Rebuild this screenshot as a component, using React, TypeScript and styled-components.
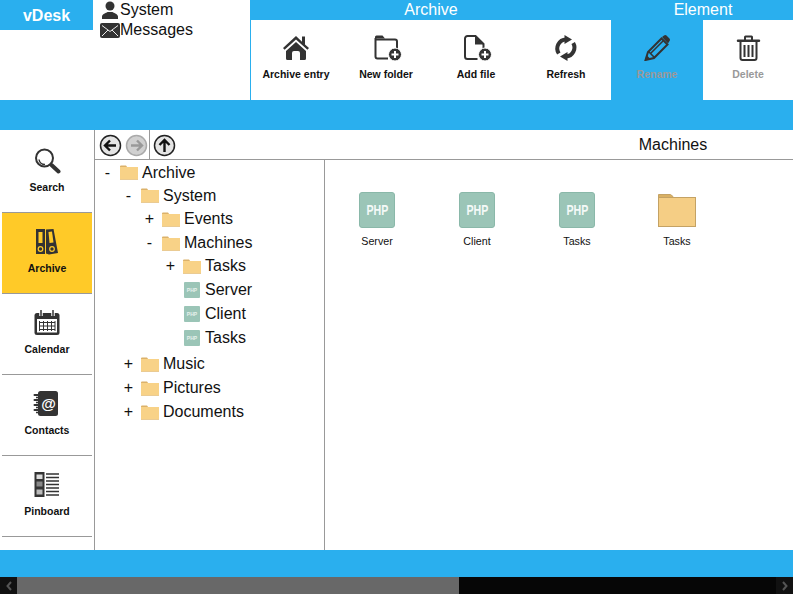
import React from 'react';
import styled, { createGlobalStyle } from 'styled-components';

const BLUE = '#2aafee';
const DARK = '#333333';
const LINE = '#999999';

const GlobalStyle = createGlobalStyle`
  html, body {
    margin: 0;
    padding: 0;
    overflow: hidden;
    background: #fff;
    font-family: "Liberation Sans", Arial, sans-serif;
    color: #111;
  }
`;

const Page = styled.div`
  width: 793px;
  height: 594px;
  display: flex;
  flex-direction: column;
  overflow: hidden;
`;

const Header = styled.header`
  height: 100px;
  display: flex;
`;

const Brand = styled.div`
  width: 93px;
  height: 30px;
  background: ${BLUE};
  color: #fff;
  font-size: 16px;
  font-weight: bold;
  line-height: 31px;
  text-align: center;
`;

const UserMenu = styled.div`
  width: 157px;
  box-sizing: border-box;
  padding-left: 7px;
  display: flex;
  flex-direction: column;
`;

const UserRow = styled.div`
  height: 20px;
  display: flex;
  align-items: center;
  font-size: 16px;
  line-height: 20px;
`;

const UserIcon = styled.svg`
  width: 20px;
  height: 18px;
  flex: none;
`;

const Ribbon = styled.div`
  flex: 1;
  display: flex;
  border-left: 1px solid ${BLUE};
`;

const RibbonGroup = styled.section<{ $width: number }>`
  width: ${(p) => p.$width}px;
  display: flex;
  flex-direction: column;
`;

const RibbonTitle = styled.div<{ $inset?: number }>`
  height: 20px;
  padding-left: ${(p) => p.$inset ?? 0}px;
  background: ${BLUE};
  color: #fff;
  font-size: 16px;
  line-height: 19px;
  text-align: center;
`;

const RibbonButtons = styled.div`
  height: 80px;
  display: flex;
`;

const RibbonButton = styled.div<{ $width?: number; $selected?: boolean; $disabled?: boolean }>`
  width: ${(p) => p.$width ?? 90}px;
  padding-top: 15px;
  box-sizing: border-box;
  display: flex;
  flex-direction: column;
  align-items: center;
  background: ${(p) => (p.$selected ? BLUE : '#fff')};
  color: ${(p) => (p.$disabled ? '#999' : '#111')};
  font-size: 10.5px;
  font-weight: bold;
  line-height: 13px;
`;

const ToolIcon = styled.svg`
  width: 32px;
  height: 26px;
  margin-bottom: 7px;
  flex: none;
`;

const Band = styled.div<{ $height: number }>`
  height: ${(p) => p.$height}px;
  flex: none;
  background: ${BLUE};
`;

const Main = styled.main`
  flex: 1;
  min-height: 0;
  display: flex;
`;

const Sidebar = styled.nav`
  width: 95px;
  box-sizing: border-box;
  padding: 2px 2px 0;
  border-right: 1px solid ${LINE};
  flex: none;
`;

const NavItem = styled.div<{ $active?: boolean }>`
  width: 90px;
  height: 81px;
  box-sizing: border-box;
  padding-top: 16px;
  display: flex;
  flex-direction: column;
  align-items: center;
  background: ${(p) => (p.$active ? '#ffca28' : 'transparent')};
  border-bottom: 1px solid ${LINE};
  font-size: 10.5px;
  font-weight: bold;
  line-height: 13px;
`;

const Workspace = styled.div`
  flex: 1;
  min-width: 0;
  display: flex;
  flex-direction: column;
`;

const PathBar = styled.div`
  height: 30px;
  box-sizing: border-box;
  flex: none;
  display: flex;
  border-bottom: 1px solid ${LINE};
`;

const NavGroup = styled.div<{ $divided?: boolean }>`
  height: 29px;
  box-sizing: border-box;
  padding: 3.5px 0 0 ${(p) => (p.$divided ? 3.5 : 2.5)}px;
  display: flex;
  gap: 3px;
  width: ${(p) => (p.$divided ? '55px' : 'auto')};
  border-right: ${(p) => (p.$divided ? `1px solid ${LINE}` : 'none')};
`;

const RoundIcon = styled.svg`
  width: 23px;
  height: 23px;
  flex: none;
`;

const PathTitle = styled.div`
  width: 240px;
  margin-left: auto;
  font-size: 16px;
  line-height: 29px;
  text-align: center;
`;

const Panes = styled.div`
  flex: 1;
  min-height: 0;
  display: flex;
`;

const TreePane = styled.div`
  width: 230px;
  box-sizing: border-box;
  padding-top: 0.5px;
  flex: none;
  border-right: 1px solid ${LINE};
`;

const Branch = styled.div<{ $gap?: boolean }>`
  margin-bottom: ${(p) => (p.$gap ? 2 : 0)}px;
`;

const BranchChildren = styled.div`
  margin-top: -0.7px;
`;

const TreeRow = styled.div<{ $depth: number }>`
  height: 24px;
  padding-left: ${(p) => 5 + p.$depth * 21}px;
  display: flex;
  align-items: center;
  font-size: 16px;
`;

const Toggle = styled.span`
  width: 15px;
  margin-right: 5px;
  text-align: center;
  flex: none;
`;

const TreeIconSlot = styled.span`
  width: 18px;
  margin-right: 4px;
  display: flex;
  justify-content: center;
  flex: none;
`;

const SmallTile = styled.span`
  width: 16px;
  height: 16px;
  border-radius: 1px;
  background: #9bc5b7;
  color: #e6f1ed;
  font-size: 5px;
  font-weight: bold;
  line-height: 16px;
  text-align: center;
`;

const FileGrid = styled.div`
  flex: 1;
  padding: 32px 0 0 2px;
  display: flex;
  align-items: flex-start;
`;

const FileCard = styled.div`
  width: 100px;
  display: flex;
  flex-direction: column;
  align-items: center;
  font-size: 10.7px;
  line-height: 13px;
`;

const PhpTile = styled.div`
  width: 36px;
  height: 36px;
  box-sizing: border-box;
  margin-bottom: 7px;
  border: 1px solid #8ab8a9;
  border-radius: 3px;
  background: #9bc5b7;
  color: #f4f9f7;
  font-size: 14px;
  font-weight: bold;
  line-height: 34px;
  text-align: center;
`;

const PhpText = styled.span`
  display: inline-block;
  transform: scaleX(0.76);
`;

const BigFolder = styled.svg`
  width: 38px;
  height: 36px;
  margin-bottom: 7px;
`;

const ScrollBar = styled.div`
  height: 17px;
  flex: none;
  display: flex;
  background: #060606;
`;

const ScrollArrow = styled.div`
  width: 17px;
  flex: none;
  display: flex;
  align-items: center;
  justify-content: center;
  background: #111;
`;

const ScrollThumb = styled.div`
  width: 442px;
  background: #686868;
`;

const ScrollGap = styled.div`
  flex: 1;
`;

const Chevron = ({ dir }: { dir: 'left' | 'right' }) => (
  <svg width="8" height="10" viewBox="0 0 8 10">
    <path
      d={dir === 'left' ? 'M6 1 2.5 5 6 9' : 'M2 1 5.5 5 2 9'}
      fill="none"
      stroke="#555"
      strokeWidth="2"
    />
  </svg>
);

const PlusBadge = () => (
  <g>
    <circle cx="25" cy="19.500" r="6.500" fill={DARK} stroke="#fff" strokeWidth="1" />
    <path d="M21.500 19.500h7M25 16v7" stroke="#fff" strokeWidth="2" />
  </g>
);

const HomeIcon = () => (
  <ToolIcon viewBox="0 0 32 26">
    <path d="M16 1 3 13l1.600 1.700L16 4.600l11.400 10.100L29 13l-4-3.600V1.500h-3v5.200z" fill={DARK} />
    <path d="M6 16 16 7l10 9v7.500a1.500 1.500 0 0 1-1.500 1.500H20v-7a2 2 0 0 0-2-2h-4a2 2 0 0 0-2 2v7H7.500A1.500 1.500 0 0 1 6 23.500z" fill={DARK} />
  </ToolIcon>
);

const FolderPlusIcon = () => (
  <ToolIcon viewBox="0 0 32 26">
    <path d="M5 2a1.500 1.500 0 0 1 1.500-1.500h6L15 3.500H5z" fill={DARK} />
    <path d="M18 23.500H7.500a2 2 0 0 1-2-2V3M5.500 4.500H25a2 2 0 0 1 2 2V15" fill="none" stroke={DARK} strokeWidth="2" />
    <PlusBadge />
  </ToolIcon>
);

const FilePlusIcon = () => (
  <ToolIcon viewBox="0 0 32 26">
    <path d="M17.500 24H7.500a2.500 2.500 0 0 1-2.500-2.500v-18A2.500 2.500 0 0 1 7.500 1h8l8 8v5" fill="none" stroke={DARK} strokeWidth="2" />
    <path d="M15 1 23.500 9.500H15z" fill={DARK} />
    <PlusBadge />
  </ToolIcon>
);

const RefreshIcon = () => (
  <ToolIcon viewBox="0 0 32 26">
    <path d="M8.800 18.500A9 9 0 0 1 16 4.500" fill="none" stroke={DARK} strokeWidth="4" />
    <path d="M23.200 8A9 9 0 0 1 16 21.500" fill="none" stroke={DARK} strokeWidth="4" />
    <path d="M14.500 0 22 4.500l-7.500 4.500zM17.500 17 10 21.500l7.500 4.500z" fill={DARK} />
  </ToolIcon>
);

const PencilIcon = () => (
  <ToolIcon viewBox="0 0 32 26">
    <path d="M4.500 25 7 17 20.500 3.500l6 6L13 23z" fill="none" stroke={DARK} strokeWidth="2" />
    <path d="M21 2l2-1.500a2 2 0 0 1 2.500 0l3 3a2 2 0 0 1 0 2.500L27 8.500zM4 25.500l1.500-5.500 4 4z" fill={DARK} />
    <path d="M10 18 22 6M7.500 16.500l6 6" fill="none" stroke={DARK} strokeWidth="1.500" />
  </ToolIcon>
);

const TrashIcon = () => (
  <ToolIcon viewBox="0 0 32 26">
    <path d="M6 4.500h21a1 1 0 0 1 0 2.500H6a1 1 0 0 1 0-2.500zM12 4.500V2a1.500 1.500 0 0 1 1.500-1.500h6A1.500 1.500 0 0 1 21 2v2.500h-2V2.500h-5v2z" fill={DARK} />
    <path d="M8.500 7v16a2 2 0 0 0 2 2h12a2 2 0 0 0 2-2V7" fill="none" stroke={DARK} strokeWidth="2" />
    <path d="M12.500 10v12M16.500 10v12M20.500 10v12" stroke={DARK} strokeWidth="2" />
  </ToolIcon>
);

const SearchIcon = () => (
  <ToolIcon viewBox="0 0 32 26">
    <circle cx="13.500" cy="10" r="8.500" fill="none" stroke={DARK} strokeWidth="2" />
    <path d="M8 11.500a6 6 0 0 0 6 5" fill="none" stroke={DARK} strokeWidth="1.500" />
    <path d="M20.500 17 27.500 23.500" stroke={DARK} strokeWidth="4" strokeLinecap="round" />
  </ToolIcon>
);

const BindersIcon = () => (
  <ToolIcon viewBox="0 0 32 26">
    <path d="M5 0h9v25H5z" fill={DARK} />
    <path d="M15 0.500 22.500 0 27 24l-9 1.500-3-1z" fill={DARK} />
    <rect x="7.500" y="3" width="4" height="11" fill="#ffca28" />
    <path d="M17.500 3 21 2.500 22.500 13.500 18.500 14z" fill="#ffca28" />
    <circle cx="9.500" cy="20" r="2.300" fill="none" stroke="#ffca28" strokeWidth="1.200" />
    <circle cx="21" cy="20" r="2.300" fill="none" stroke="#ffca28" strokeWidth="1.200" />
  </ToolIcon>
);

const CalendarIcon = () => (
  <ToolIcon viewBox="0 0 32 26">
    <rect x="3.500" y="3" width="25" height="22" rx="2.500" fill={DARK} />
    <rect x="6" y="9" width="20" height="13.500" fill="#fff" />
    <path d="M8 12.500h16M8 16h16M8 19.500h16" stroke={DARK} strokeWidth="1" />
    <path d="M8.500 11v10M12.500 11v10M16.500 11v10M20.500 11v10M24 11v10" stroke={DARK} strokeWidth="1" />
    <path d="M10 1v5M22 1v5" stroke="#fff" strokeWidth="3.500" />
    <path d="M10 0.500v5M22 0.500v5" stroke={DARK} strokeWidth="1.500" strokeLinecap="round" />
  </ToolIcon>
);

const ContactsIcon = () => (
  <ToolIcon viewBox="0 0 32 26">
    <rect x="7" y="0" width="20" height="25" rx="2.500" fill={DARK} />
    <path d="M3.500 4h5M3.500 9h5M3.500 14h5M3.500 19h5" stroke={DARK} strokeWidth="2" strokeLinecap="round" />
    <path d="M5 6.500h4M5 11.500h4M5 16.500h4M5 21.500h4" stroke={DARK} strokeWidth="1.500" />
    <text x="17.500" y="17.500" fill="#fff" fontFamily="Liberation Sans, sans-serif" fontSize="15" textAnchor="middle">
      @
    </text>
  </ToolIcon>
);

const PinboardIcon = () => (
  <ToolIcon viewBox="0 0 32 26">
    <rect x="3.500" y="0" width="10" height="25" fill={DARK} />
    <rect x="5.500" y="2.500" width="6" height="4.500" fill="#ddd" />
    <rect x="5.500" y="9.500" width="6" height="5" fill="#888" />
    <rect x="5.500" y="17.500" width="6" height="5" fill="#bbb" />
    <path d="M15 2h13M15 5.500h13M15 9h13M15 12.500h13M15 16h13M15 19.500h13M15 23h13" stroke={DARK} strokeWidth="1.500" />
  </ToolIcon>
);

const RoundButton = ({ d, ghost }: { d: string; ghost?: boolean }) => (
  <RoundIcon viewBox="0 0 23 23">
    <circle
      cx="11.500"
      cy="11.500"
      r="10"
      fill={ghost ? '#d0d0d0' : '#e4e4e4'}
      stroke={ghost ? '#aaaaaa' : '#222222'}
      strokeWidth="1.500"
    />
    <path d={d} fill="none" stroke={ghost ? '#999999' : '#111111'} strokeWidth="2.400" />
  </RoundIcon>
);

const FolderGlyph = () => (
  <svg width="18" height="15" viewBox="0 0 18 15">
    <path d="M0 1.500A1 1 0 0 1 1 .5h5l1.500 2H0z" fill="#dcb26a" />
    <rect x="0" y="2" width="18" height="13" fill="#f8d287" />
    <rect x="0" y="14" width="18" height="1" fill="#eacb93" />
  </svg>
);

type Node = {
  label: string;
  toggle?: '+' | '-';
  file?: boolean;
  gap?: boolean;
  children?: Node[];
};

const tree: Node = {
  label: 'Archive',
  toggle: '-',
  children: [
    {
      label: 'System',
      toggle: '-',
      gap: true,
      children: [
        { label: 'Events', toggle: '+' },
        {
          label: 'Machines',
          toggle: '-',
          children: [
            { label: 'Tasks', toggle: '+' },
            { label: 'Server', file: true },
            { label: 'Client', file: true },
            { label: 'Tasks', file: true },
          ],
        },
      ],
    },
    { label: 'Music', toggle: '+' },
    { label: 'Pictures', toggle: '+' },
    { label: 'Documents', toggle: '+' },
  ],
};

const TreeNode = ({ node, depth }: { node: Node; depth: number }) => (
  <Branch $gap={node.gap}>
    <TreeRow $depth={depth}>
      <Toggle>{node.toggle ?? ''}</Toggle>
      <TreeIconSlot>{node.file ? <SmallTile>PHP</SmallTile> : <FolderGlyph />}</TreeIconSlot>
      {node.label}
    </TreeRow>
    {node.children && (
      <BranchChildren>
        {node.children.map((child, i) => (
          <TreeNode key={i} node={child} depth={depth + 1} />
        ))}
      </BranchChildren>
    )}
  </Branch>
);

const files = ['Server', 'Client', 'Tasks'];

const App = () => (
  <Page>
    <GlobalStyle />
    <Header>
      <Brand>vDesk</Brand>
      <UserMenu>
        <UserRow>
          <UserIcon viewBox="0 0 20 18">
            <circle cx="10" cy="5" r="4.500" fill={DARK} />
            <path d="M2 18v-2.500c0-2.500 4-3.500 5.500-4.500h5c1.500 1 5.500 2 5.500 4.500V18z" fill={DARK} />
          </UserIcon>
          System
        </UserRow>
        <UserRow>
          <UserIcon viewBox="0 0 20 18">
            <rect x="0" y="2" width="20" height="15" rx="2" fill={DARK} />
            <path d="M2 4.500 10 10.500 18 4.500M2 15l6-6M18 15l-6-6" fill="none" stroke="#eee" strokeWidth="1" />
          </UserIcon>
          Messages
        </UserRow>
      </UserMenu>
      <Ribbon>
        <RibbonGroup $width={360}>
          <RibbonTitle>Archive</RibbonTitle>
          <RibbonButtons>
            <RibbonButton>
              <HomeIcon />
              Archive entry
            </RibbonButton>
            <RibbonButton>
              <FolderPlusIcon />
              New folder
            </RibbonButton>
            <RibbonButton>
              <FilePlusIcon />
              Add file
            </RibbonButton>
            <RibbonButton>
              <RefreshIcon />
              Refresh
            </RibbonButton>
          </RibbonButtons>
        </RibbonGroup>
        <RibbonGroup $width={182}>
          <RibbonTitle $inset={2}>Element</RibbonTitle>
          <RibbonButtons>
            <RibbonButton $width={92} $selected $disabled>
              <PencilIcon />
              Rename
            </RibbonButton>
            <RibbonButton $disabled>
              <TrashIcon />
              Delete
            </RibbonButton>
          </RibbonButtons>
        </RibbonGroup>
      </Ribbon>
    </Header>
    <Band $height={30} />
    <Main>
      <Sidebar>
        <NavItem>
          <SearchIcon />
          Search
        </NavItem>
        <NavItem $active>
          <BindersIcon />
          Archive
        </NavItem>
        <NavItem>
          <CalendarIcon />
          Calendar
        </NavItem>
        <NavItem>
          <ContactsIcon />
          Contacts
        </NavItem>
        <NavItem>
          <PinboardIcon />
          Pinboard
        </NavItem>
      </Sidebar>
      <Workspace>
        <PathBar>
          <NavGroup $divided>
            <RoundButton d="M17 11.500H6.500M11 6.500 6 11.500l5 5" />
            <RoundButton ghost d="M6 11.500h10.500M12 6.500l5 5-5 5" />
          </NavGroup>
          <NavGroup>
            <RoundButton d="M11.500 18V6.500M6.500 11 11.500 6l5 5" />
          </NavGroup>
          <PathTitle>Machines</PathTitle>
        </PathBar>
        <Panes>
          <TreePane>
            <TreeNode node={tree} depth={0} />
          </TreePane>
          <FileGrid>
            {files.map((name) => (
              <FileCard key={name}>
                <PhpTile>
                  <PhpText>PHP</PhpText>
                </PhpTile>
                {name}
              </FileCard>
            ))}
            <FileCard>
              <BigFolder viewBox="0 0 38 36">
                <path d="M.5 2.500h12l2.500 2v3H.5z" fill="#d9b063" stroke="#c4a264" />
                <rect x=".5" y="5.500" width="37" height="29" fill="#f5ce85" stroke="#c4a264" />
              </BigFolder>
              Tasks
            </FileCard>
          </FileGrid>
        </Panes>
      </Workspace>
    </Main>
    <Band $height={27} />
    <ScrollBar>
      <ScrollArrow>
        <Chevron dir="left" />
      </ScrollArrow>
      <ScrollThumb />
      <ScrollGap />
      <ScrollArrow>
        <Chevron dir="right" />
      </ScrollArrow>
    </ScrollBar>
  </Page>
);

export default App;
